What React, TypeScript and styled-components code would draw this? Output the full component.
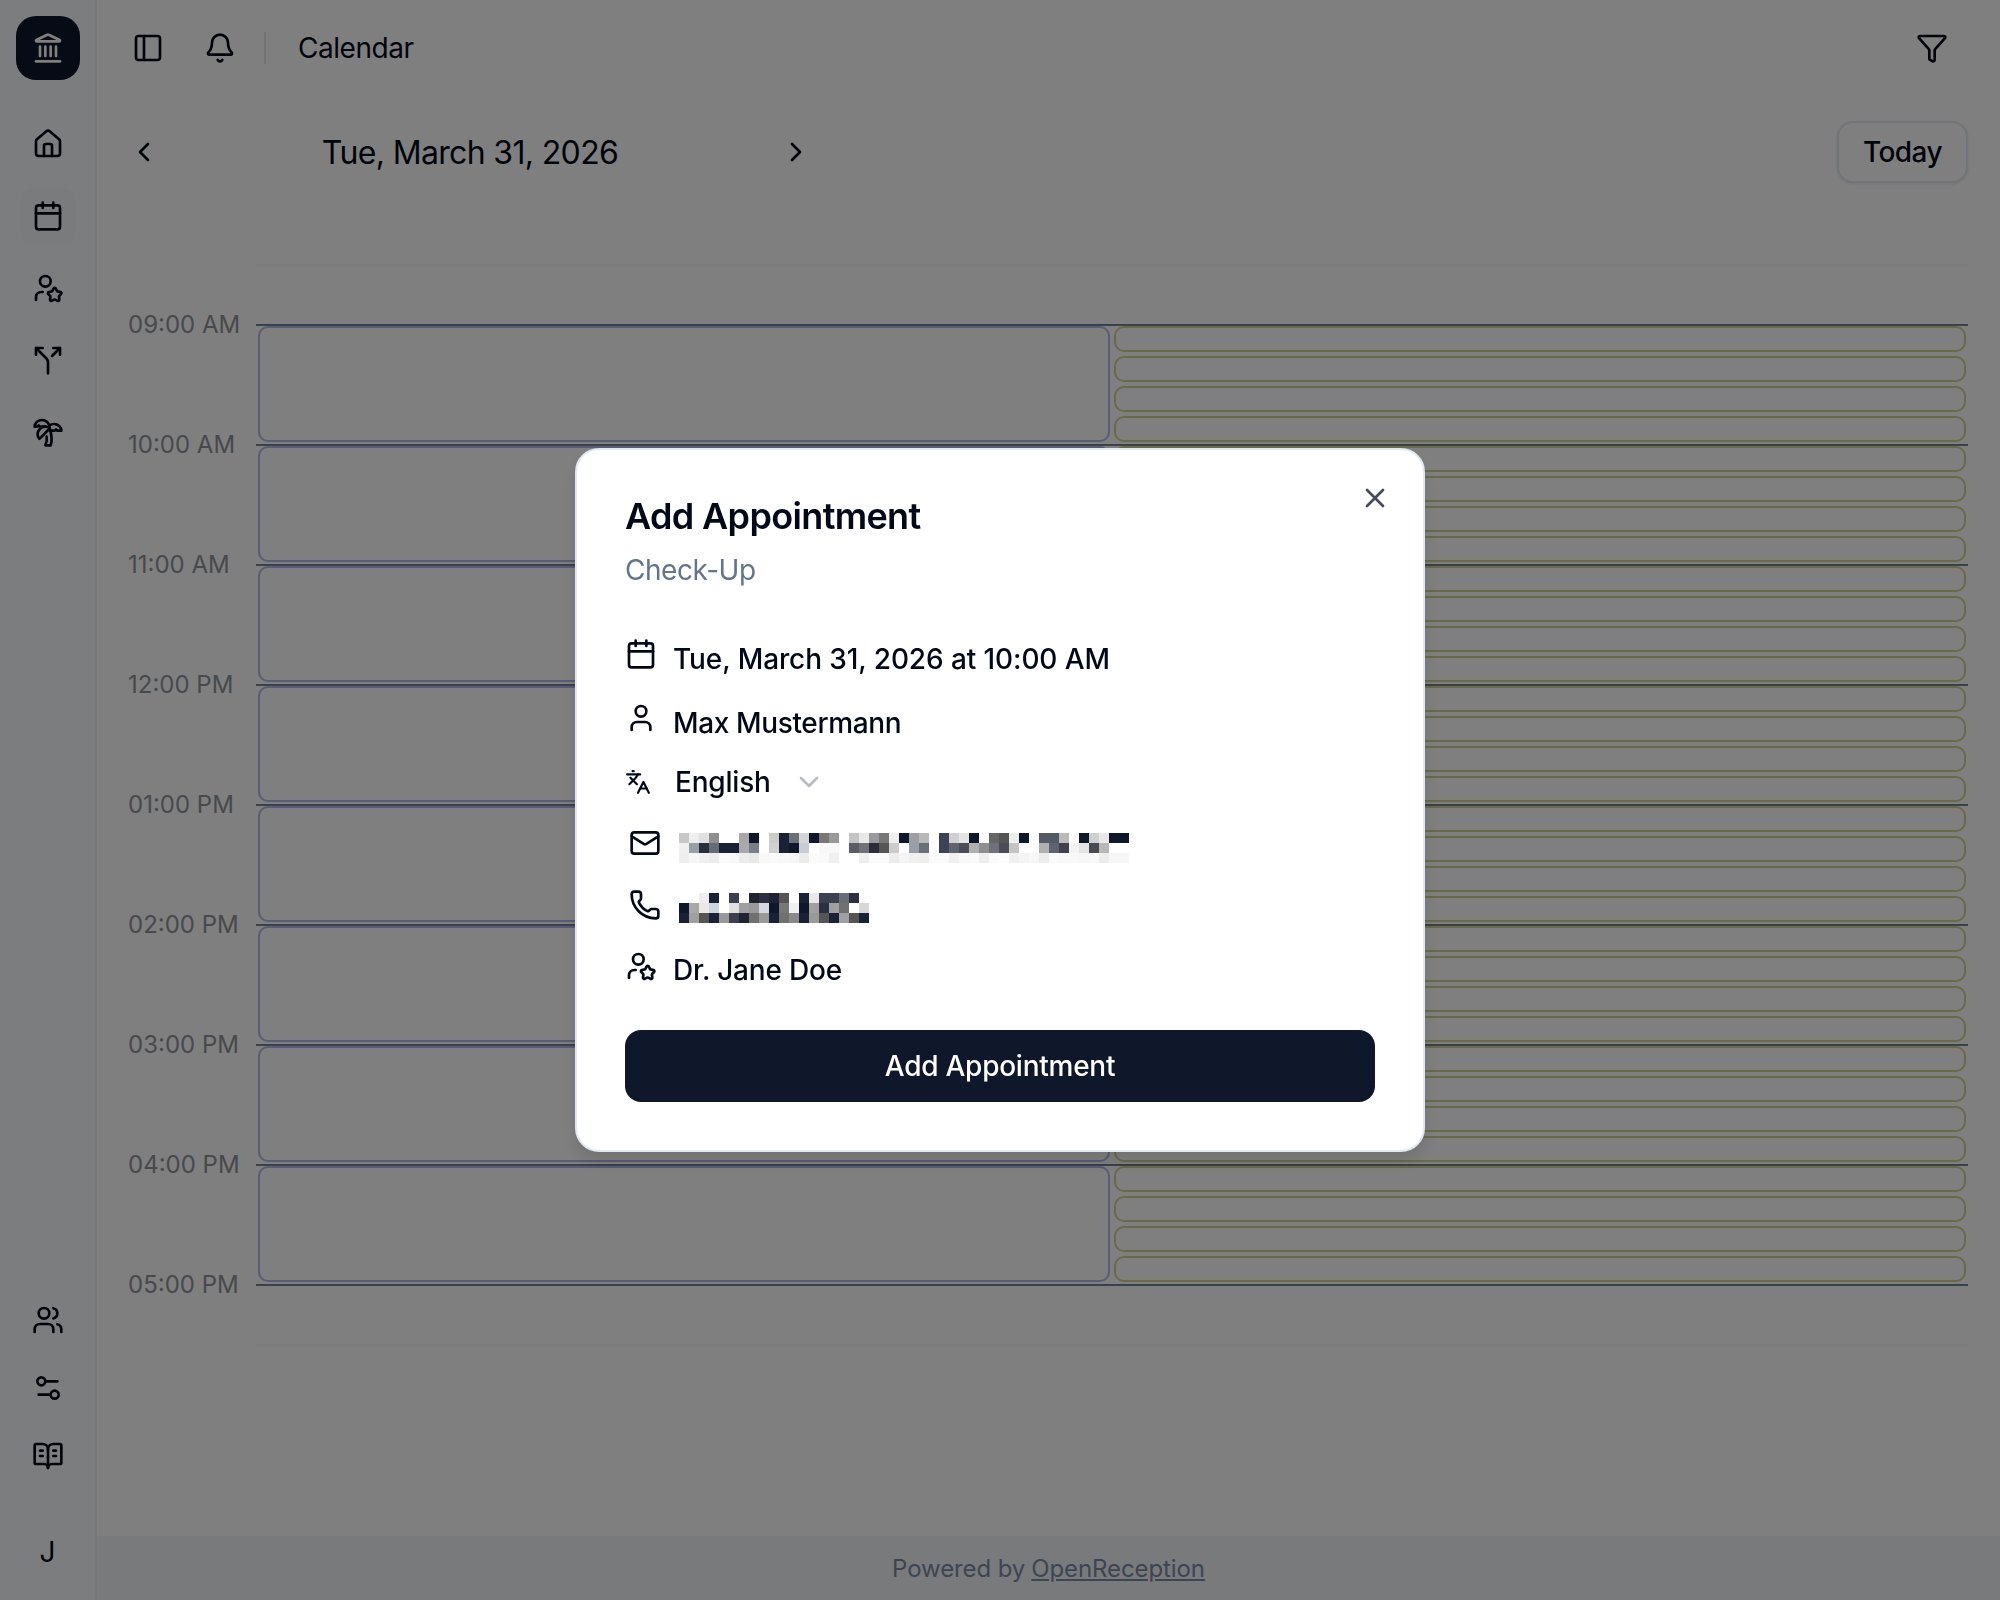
import React from 'react';
import styled, { createGlobalStyle } from 'styled-components';
import {
  Bell,
  BookOpenText,
  Calendar,
  ChevronDown,
  ChevronLeft,
  ChevronRight,
  Funnel,
  House,
  Landmark,
  Languages,
  Mail,
  PanelLeft,
  Phone,
  Settings2,
  Split,
  TreePalm,
  User,
  UserStar,
  Users,
  X,
} from 'lucide-react';

const GlobalStyle = createGlobalStyle`
  html, body {
    margin: 0;
    padding: 0;
    background: #fff;
  }
  body {
    font-family: Inter, "Liberation Sans", sans-serif;
    color: #020817;
  }
  * {
    box-sizing: border-box;
  }
`;

const Page = styled.div`
  display: flex;
  width: 2000px;
  height: 1600px;
  overflow: hidden;
`;

const Sidebar = styled.aside`
  display: flex;
  flex-direction: column;
  align-items: center;
  width: 97px;
  flex: none;
  padding: 16px 0 20px;
  background: #f8fafc;
  border-right: 2px solid #e8ecf1;
`;

const Logo = styled.div`
  display: flex;
  align-items: center;
  justify-content: center;
  width: 64px;
  height: 64px;
  margin-bottom: 36px;
  border-radius: 20px;
  background: #0f172a;
  color: #fff;
`;

const NavList = styled.nav<{ $gap: number }>`
  display: flex;
  flex-direction: column;
  gap: ${(p) => p.$gap}px;
`;

const NavItem = styled.div<{ $active?: boolean }>`
  display: flex;
  align-items: center;
  justify-content: center;
  width: 56px;
  height: 56px;
  border-radius: 12px;
  background: ${(p) => (p.$active ? '#f5f7fa' : 'transparent')};
`;

const SidebarFoot = styled.div`
  display: flex;
  flex-direction: column;
  align-items: center;
  gap: 40px;
  margin-top: auto;
`;

const Avatar = styled.div`
  display: flex;
  align-items: center;
  justify-content: center;
  width: 56px;
  height: 56px;
  border-radius: 12px;
  background: #f8fafc;
  font-size: 28px;
`;

const Main = styled.main`
  display: flex;
  flex-direction: column;
  flex: 1;
  min-width: 0;
`;

const Header = styled.header`
  display: flex;
  align-items: center;
  height: 96px;
  flex: none;
  padding: 0 48px 0 23px;
`;

const HeaderButton = styled.div`
  display: flex;
  align-items: center;
  justify-content: center;
  width: 56px;
  height: 56px;
  margin-right: 16px;
`;

const HeaderRule = styled.div`
  width: 2px;
  height: 32px;
  background: #e5e7eb;
`;

const PageTitle = styled.div`
  margin-left: 32px;
  font-size: 28px;
  letter-spacing: -0.45px;
`;

const FilterButton = styled.div`
  display: flex;
  align-items: center;
  justify-content: center;
  width: 40px;
  height: 40px;
  margin-left: auto;
`;

const DateBar = styled.div`
  display: flex;
  align-items: center;
  justify-content: space-between;
  height: 112px;
  flex: none;
  padding: 0 32px 0 31px;
`;

const DateNav = styled.div`
  display: flex;
  align-items: center;
  justify-content: space-between;
  width: 684px;
`;

const DateLabel = styled.div`
  font-size: 32px;
  letter-spacing: -0.65px;
`;

const TodayButton = styled.div`
  display: flex;
  align-items: center;
  justify-content: center;
  width: 131px;
  height: 62px;
  border: 2px solid #e2e8f0;
  border-radius: 16px;
  background: #fff;
  box-shadow: 0 1px 3px rgba(15, 23, 42, 0.1);
  font-size: 28px;
  font-weight: 500;
  letter-spacing: -0.6px;
`;

const Schedule = styled.section`
  margin: 56px 32px 0 31px;
`;

const EdgeRow = styled.div`
  height: 60px;
  margin-left: 128px;
  border-top: 2px solid #f1f5f9;
`;

const HourRow = styled.div`
  display: grid;
  grid-template-columns: 128px 1fr;
  height: 120px;
`;

const EndRow = styled(HourRow)`
  height: 60px;
`;

const TimeLabel = styled.div`
  margin-top: -14px;
  height: 30px;
  font-size: 24px;
  line-height: 30px;
  color: #8f939b;
`;

const Slots = styled.div`
  display: grid;
  grid-template-columns: 1fr 1fr;
  gap: 4px;
  align-items: start;
  border-top: 2px solid #73829a;
  padding: 0 2px;
  height: 120px;
`;

const EndLine = styled.div`
  border-top: 2px solid #73829a;
`;

const BlueSlot = styled.div`
  height: 116px;
  border: 2px solid #b4b6e8;
  border-radius: 10px;
`;

const GreenStack = styled.div`
  display: flex;
  flex-direction: column;
  gap: 4px;
`;

const GreenSlot = styled.div`
  height: 26px;
  border: 2px solid #d2d58f;
  border-radius: 10px;
`;

const Footer = styled.footer`
  display: flex;
  align-items: center;
  justify-content: center;
  height: 64px;
  flex: none;
  margin-top: auto;
  background: #f1f5f9;
  font-size: 24px;
  letter-spacing: -0.1px;
  color: #7c8aa5;
`;

const FooterLink = styled.a`
  margin-left: 6px;
  color: inherit;
  text-decoration: underline;
`;

const Overlay = styled.div`
  position: fixed;
  inset: 0;
  display: flex;
  align-items: center;
  justify-content: center;
  background: rgba(0, 0, 0, 0.5);
`;

const Modal = styled.div`
  position: relative;
  width: 850px;
  padding: 48px;
  border: 2px solid #e2e8f0;
  border-radius: 24px;
  background: #fff;
  box-shadow: 0 10px 15px rgba(0, 0, 0, 0.1);
`;

const CloseButton = styled.div`
  position: absolute;
  top: 32px;
  right: 32px;
  display: flex;
  color: #444c5a;
`;

const ModalTitle = styled.h2`
  margin: 0;
  font-size: 36px;
  line-height: 36px;
  font-weight: 600;
  letter-spacing: -0.65px;
`;

const ModalSubtitle = styled.div`
  margin-top: 16px;
  font-size: 28px;
  line-height: 40px;
  letter-spacing: -0.45px;
  color: #64748b;
`;

const DetailList = styled.div`
  display: flex;
  flex-direction: column;
  margin-top: 34px;
`;

const DetailRow = styled.div<{ $height: number; $indent?: number; $gap: number }>`
  display: flex;
  align-items: center;
  height: ${(p) => p.$height}px;
  padding-left: ${(p) => p.$indent ?? 0}px;
  gap: ${(p) => p.$gap}px;
  font-size: 28px;
  font-weight: 500;
`;

const DetailIcon = styled.span<{ $lift?: number }>`
  display: flex;
  margin-bottom: ${(p) => p.$lift ?? 0}px;
`;

const DetailText = styled.span<{ $drop?: number; $tracking?: number }>`
  margin-top: ${(p) => p.$drop ?? 0}px;
  letter-spacing: ${(p) => p.$tracking ?? -0.2}px;
`;

const LanguageCaret = styled.span`
  display: flex;
  margin-left: -2px;
  color: #b9bcc2;
`;

const Mosaic = styled.svg<{ $drop: number }>`
  display: block;
  flex: none;
  margin-top: ${(p) => p.$drop}px;
`;

const SubmitButton = styled.div`
  display: flex;
  align-items: center;
  justify-content: center;
  height: 72px;
  margin-top: 31px;
  border-radius: 16px;
  background: #0f172a;
  color: #fff;
  font-size: 28px;
  font-weight: 500;
  letter-spacing: -0.25px;
`;

const hours = [
  '09:00 AM',
  '10:00 AM',
  '11:00 AM',
  '12:00 PM',
  '01:00 PM',
  '02:00 PM',
  '03:00 PM',
  '04:00 PM',
];

// hidden contact details, one hex grey per 10px block
const emailBlocks = [
  'c8c8c8 eeeeee e0e0e0 8e8e90 ffffff ffffff a8a8a8 0f172a ffffff cccccc 1a2035 6a6f7a d5d5d5 0f172a 777777 999999 ffffff c4c4c4 e8e8e8 9a9a9e 777777 eeeeee 0f172a a0a0a4 b8b8b8 ffffff 3d4258 d0d0d0 e4e4e4 0f172a ffffff 666666 555555 eeeeee 0f172a ffffff 555b66 555b66 bbbbbb ffffff 0f172a d0d0d0 e8e8e8 0f172a 0f172a',
  'f0f0f0 999fa8 2a2e3c 666a75 1a2035 1a2035 aaaaaa 777f88 ffffff d0d0d0 1a2035 0f172a c8ccd5 ffffff f8f8f8 f8f8f8 ffffff 5a5d66 70727a 2a2c38 555555 cccccc ffffff 999fa8 6a6f7a ffffff 3d4258 5f6370 4a4d58 b0b0b0 8e8e90 707078 4a4d58 c4c4c4 ffffff ffffff b0b0b0 5f6370 3f424e f4f4f4 e4e4e4 4a4a52 b8b8b8 ffffff ffffff',
  'eeeeee f6f6f6 f0f0f0 ececec fafafa f8f8f8 ececec e8e8e8 f8f8f8 fafafa f8f8f8 f6f6f6 ececec fcfcfc fafafa f0f0f0 ffffff ffffff eeeeee fafafa fafafa ececec f4f4f4 f0f0f0 eeeeee fafafa fafafa f0f0f0 f8f8f8 fafafa eeeeee fafafa fcfcfc f0f0f0 f4f4f4 f8f8f8 ececec fafafa f8f8f8 f8f8f8 f6f6f6 f8f8f8 ececec f6f6f6 f6f6f6',
];

const phoneBlocks = [
  'ffffff ffffff eeeeee 1a2035 ffffff 3d4050 ffffff 1f2333 2d3040 1f2333 555555 ffffff 1a2035 e8e8e8 3d4050 3d4050 6a6d78 2d3040 ffffff',
  '0f172a a8a8a8 e8e8e8 d0d4dc ffffff e0e0e0 a0a0a0 999999 d5d8e0 0f172a 777777 f0f0f0 0f172a a0a0a0 2d3040 a0a0a0 707070 ffffff d8d8d8',
  '1a2035 a0a0a0 555555 1a2035 999999 3d4050 1f2333 707070 999999 1a2035 707070 8a8a8a 1a2035 999999 555555 1a2035 a0a0a0 555555 1a2035',
];

const Blocks = ({ rows, drop }: { rows: string[]; drop: number }) => {
  const cells = rows.map((row) => row.split(' '));
  return (
    <Mosaic
      $drop={drop}
      width={cells[0].length * 10}
      height={cells.length * 10}
      shapeRendering="crispEdges"
    >
      {cells.map((row, y) =>
        row.map((hex, x) => (
          <rect
            key={`${x}-${y}`}
            x={x * 10}
            y={y * 10}
            width="10"
            height="10"
            fill={`#${hex}`}
          />
        ))
      )}
    </Mosaic>
  );
};

const App = () => {
  return (
    <>
      <GlobalStyle />
      <Page>
        <Sidebar>
          <Logo>
            <Landmark size={32} />
          </Logo>
          <NavList $gap={16}>
            <NavItem>
              <House size={32} />
            </NavItem>
            <NavItem $active>
              <Calendar size={32} />
            </NavItem>
            <NavItem>
              <UserStar size={32} />
            </NavItem>
            <NavItem>
              <Split size={32} />
            </NavItem>
            <NavItem>
              <TreePalm size={32} />
            </NavItem>
          </NavList>
          <SidebarFoot>
            <NavList $gap={12}>
              <NavItem>
                <Users size={32} />
              </NavItem>
              <NavItem>
                <Settings2 size={32} />
              </NavItem>
              <NavItem>
                <BookOpenText size={32} />
              </NavItem>
            </NavList>
            <Avatar>J</Avatar>
          </SidebarFoot>
        </Sidebar>
        <Main>
          <Header>
            <HeaderButton>
              <PanelLeft size={32} />
            </HeaderButton>
            <HeaderButton>
              <Bell size={32} />
            </HeaderButton>
            <HeaderRule />
            <PageTitle>Calendar</PageTitle>
            <FilterButton>
              <Funnel size={32} />
            </FilterButton>
          </Header>
          <DateBar>
            <DateNav>
              <ChevronLeft size={32} />
              <DateLabel>Tue, March 31, 2026</DateLabel>
              <ChevronRight size={32} />
            </DateNav>
            <TodayButton>Today</TodayButton>
          </DateBar>
          <Schedule>
            <EdgeRow />
            {hours.map((hour) => (
              <HourRow key={hour}>
                <TimeLabel>{hour}</TimeLabel>
                <Slots>
                  <BlueSlot />
                  <GreenStack>
                    <GreenSlot />
                    <GreenSlot />
                    <GreenSlot />
                    <GreenSlot />
                  </GreenStack>
                </Slots>
              </HourRow>
            ))}
            <EndRow>
              <TimeLabel>05:00 PM</TimeLabel>
              <EndLine />
            </EndRow>
            <EdgeRow />
          </Schedule>
          <Footer>
            Powered by <FooterLink href="#">OpenReception</FooterLink>
          </Footer>
        </Main>
      </Page>
      <Overlay>
        <Modal>
          <CloseButton>
            <X size={32} />
          </CloseButton>
          <ModalTitle>Add Appointment</ModalTitle>
          <ModalSubtitle>Check-Up</ModalSubtitle>
          <DetailList>
            <DetailRow $height={64} $gap={16}>
              <DetailIcon $lift={4}>
                <Calendar size={32} />
              </DetailIcon>
              <DetailText $drop={5} $tracking={-0.1}>
                Tue, March 31, 2026 at 10:00 AM
              </DetailText>
            </DetailRow>
            <DetailRow $height={64} $gap={16}>
              <DetailIcon $lift={4}>
                <User size={32} />
              </DetailIcon>
              <DetailText $drop={5} $tracking={-0.36}>
                Max Mustermann
              </DetailText>
            </DetailRow>
            <DetailRow $height={60} $gap={24}>
              <DetailIcon>
                <Languages size={26} />
              </DetailIcon>
              <DetailText>English</DetailText>
              <LanguageCaret>
                <ChevronDown size={32} />
              </LanguageCaret>
            </DetailRow>
            <DetailRow $height={61} $indent={4} $gap={18}>
              <DetailIcon>
                <Mail size={32} />
              </DetailIcon>
              <Blocks rows={emailBlocks} drop={10} />
            </DetailRow>
            <DetailRow $height={64} $indent={4} $gap={18}>
              <DetailIcon>
                <Phone size={32} />
              </DetailIcon>
              <Blocks rows={phoneBlocks} drop={6} />
            </DetailRow>
            <DetailRow $height={62} $gap={16}>
              <DetailIcon $lift={4}>
                <UserStar size={32} />
              </DetailIcon>
              <DetailText $drop={4}>Dr. Jane Doe</DetailText>
            </DetailRow>
          </DetailList>
          <SubmitButton>Add Appointment</SubmitButton>
        </Modal>
      </Overlay>
    </>
  );
};

export default App;
